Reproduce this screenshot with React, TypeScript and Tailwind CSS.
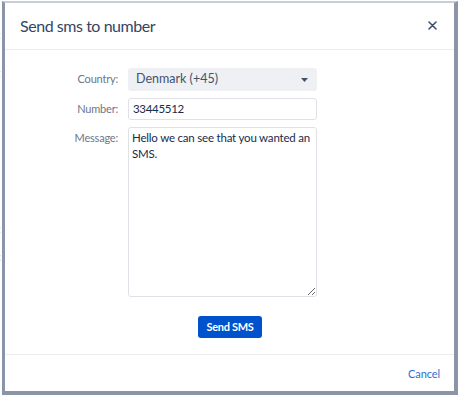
import React from 'react'

const font = { fontFamily: 'Lato, "Noto Sans", sans-serif' }

function FieldRow({ label, children, top = false }: { label: string; children: React.ReactNode; top?: boolean }) {
  return (
    <div className={`flex gap-[10px] ${top ? 'items-start' : 'items-center'}`}>
      <div className={`w-[101px] text-right text-[11px] tracking-[-0.2px] text-[#6b778c] ${top ? 'pt-[3px]' : ''}`}>{label}</div>
      {children}
    </div>
  )
}

export default function App() {
  return (
    <div className="w-[460px] h-[398px] bg-white flex pt-[1px]" style={font}>
      {/* page text peeking out behind the dialog */}
      <div className="w-[2px] overflow-hidden text-[12px] leading-none text-[#6b778c] flex flex-col">
        <span className="mt-[28px] -ml-[4px]">t</span>
        <span className="mt-[26px] -ml-[4px]">t</span>
        <span className="mt-[144px] -ml-[4px]">t</span>
        <span className="mt-[16px] -ml-[5px]">c</span>
        <span className="mt-[38px] -ml-[4px]">l</span>
      </div>

      <div className="w-[456px] h-[394px] flex flex-col border-t-[2px] border-t-[#c9cdd6] border-l-[3px] border-r-[4px] border-b-[4px] border-l-[#8c95a8] border-r-[#8c95a8] border-b-[#8c95a8] bg-white">
        {/* header */}
        <div className="h-[47px] flex items-center justify-between pl-[15px] pr-[17px] border-b border-[#ebecf0]">
          <h1 className="text-[16px] tracking-[-0.45px] text-[#344563]">Send sms to number</h1>
          <svg width="9" height="9" viewBox="0 0 9 9" className="mt-[-1px]">
            <path d="M1 1 L8 8 M8 1 L1 8" stroke="#42526e" strokeWidth="1.6" strokeLinecap="round" />
          </svg>
        </div>

        {/* body */}
        <div className="flex-1 flex flex-col pt-[18px] pl-[12px]">
          <div className="flex flex-col gap-[7px]">
            <FieldRow label="Country:">
              <div className="w-[189px] h-[23px] rounded-[3px] bg-[#eff0f3] flex items-center justify-between pl-[8px] pr-[9px] text-[12.5px] text-[#42526e]">
                <span>Denmark (+45)</span>
                <svg width="7" height="4" viewBox="0 0 7 4">
                  <path d="M0 0 H7 L3.5 4 Z" fill="#42526e" />
                </svg>
              </div>
            </FieldRow>
            <FieldRow label="Number:">
              <div className="w-[189px] h-[22px] rounded-[3px] border border-[#dfe1e6] flex items-center pl-[4px] text-[11.5px] tracking-[-0.3px] text-[#172b4d]">
                33445512
              </div>
            </FieldRow>
            <FieldRow label="Message:" top>
              <textarea
                readOnly
                defaultValue="Hello we can see that you wanted an SMS."
                className="w-[189px] h-[170px] rounded-[3px] border border-[#dfe1e6] px-[3px] py-[2px] text-[11.5px] tracking-[-0.2px] leading-[16px] text-[#172b4d] outline-none resize-y"
                style={font}
              />
            </FieldRow>
          </div>

          <div className="flex justify-center mt-[19px] pr-[11px]">
            <button className="w-[64px] h-[22px] rounded-[3px] bg-[#0052cc] text-white text-[11px] tracking-[-0.3px] font-bold">Send SMS</button>
          </div>
        </div>

        {/* footer */}
        <div className="h-[37px] border-t border-[#ebecf0] flex items-center justify-end pr-[14px] pt-[3px]">
          <span className="text-[11px] tracking-[-0.1px] text-[#2a6fd6]">Cancel</span>
        </div>
      </div>
    </div>
  )
}
